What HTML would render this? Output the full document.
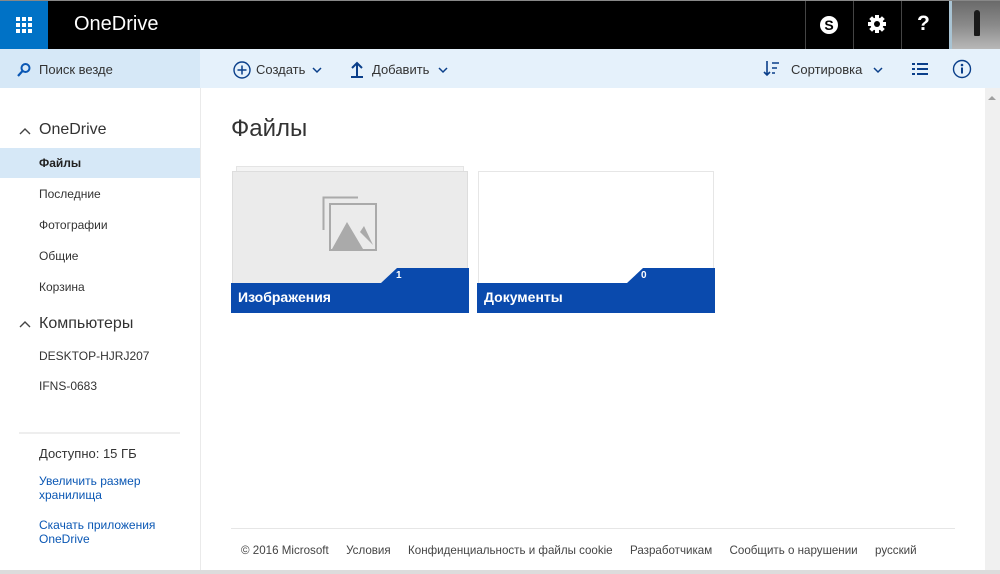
<!DOCTYPE html>
<html><head><meta charset="utf-8"><style>
*{margin:0;padding:0;box-sizing:border-box}
body{width:1000px;height:574px;overflow:hidden;background:#fff;font-family:"Segoe UI","Liberation Sans","DejaVu Sans",sans-serif;color:#333;position:relative}
.abs{position:absolute}
.top{left:0;top:0;width:1000px;height:49px;background:#000;border-top:1px solid #888}
.waffle{left:0;top:1px;width:48px;height:48px;background:#0072c6}
.cmd{left:0;top:49px;width:1000px;height:39px;background:#e5f1fb}
.search{left:0;top:49px;width:200px;height:39px;background:#d6e8f7}
.t{white-space:nowrap}
.blue{color:#0a57b4}
.footer span{margin-right:18px}
</style></head><body>
<div class="abs top"></div>
<div class="abs waffle">
<svg width="48" height="48"><g fill="#fff">
<rect x="16" y="16" width="4" height="4"/><rect x="22" y="16" width="4" height="4"/><rect x="28" y="16" width="4" height="4"/>
<rect x="16" y="22" width="4" height="4"/><rect x="22" y="22" width="4" height="4"/><rect x="28" y="22" width="4" height="4"/>
<rect x="16" y="28" width="4" height="4"/><rect x="22" y="28" width="4" height="4"/><rect x="28" y="28" width="4" height="4"/></g></svg></div>
<div class="abs t" style="left:74px;top:13px;font-size:20px;color:#fff">OneDrive</div>
<div class="abs" style="left:805px;top:1px;width:1px;height:48px;background:#444"></div>
<div class="abs" style="left:853px;top:1px;width:1px;height:48px;background:#444"></div>
<div class="abs" style="left:901px;top:1px;width:1px;height:48px;background:#444"></div>
<div class="abs" style="left:949px;top:1px;width:3px;height:48px;background:#a9c4d4"></div>
<div class="abs" style="left:952px;top:1px;width:48px;height:48px;background:linear-gradient(180deg,#6a6a6a,#8a8a8a 50%,#b8b8b8)"></div>
<div class="abs" style="left:974px;top:10px;width:6px;height:26px;background:#1a1a1a;border-radius:3px 3px 1px 1px"></div>
<svg class="abs" style="left:818px;top:14px" width="22" height="22"><circle cx="11" cy="11" r="9" fill="#fff"/><text x="11" y="16" font-size="14" font-weight="bold" text-anchor="middle" fill="#000" font-family="Liberation Sans">S</text></svg>
<svg class="abs" style="left:867px;top:14px" width="20" height="20" viewBox="0 0 20 20"><g fill="#fff"><circle cx="10" cy="10" r="6.5"/><rect x="8" y="1" width="4" height="18"/><rect x="1" y="8" width="18" height="4"/><rect x="8" y="1" width="4" height="18" transform="rotate(45 10 10)"/><rect x="8" y="1" width="4" height="18" transform="rotate(-45 10 10)"/></g><circle cx="10" cy="10" r="3" fill="#000"/></svg>
<div class="abs t" style="left:917px;top:12px;font-size:21px;font-weight:bold;color:#fff;font-family:'Liberation Sans'">?</div>
<div class="abs cmd"></div>
<div class="abs search"></div>
<svg class="abs" style="left:16px;top:62px" width="16" height="16"><circle cx="9.5" cy="6" r="4" fill="none" stroke="#0a57b4" stroke-width="2"/><line x1="6.5" y1="9" x2="2" y2="14" stroke="#0a57b4" stroke-width="2.2"/></svg>
<div class="abs t" style="left:39px;top:62px;font-size:13px;color:#333">Поиск везде</div>
<svg class="abs" style="left:232px;top:60px" width="20" height="20"><circle cx="10" cy="10" r="8" fill="none" stroke="#0a3f8a" stroke-width="1.4"/><path d="M10 5.5v9M5.5 10h9" stroke="#0a3f8a" stroke-width="1.5"/></svg>
<div class="abs t" style="left:256px;top:62px;font-size:13px">Создать</div>
<svg class="abs" style="left:312px;top:67px" width="10" height="7"><path d="M1 1l4 4 4-4" fill="none" stroke="#0a3f8a" stroke-width="1.5"/></svg>
<svg class="abs" style="left:350px;top:60px" width="14" height="18"><path d="M7 16V3M2 8l5-5 5 5M1 17h12" fill="none" stroke="#0a3f8a" stroke-width="2"/></svg>
<div class="abs t" style="left:372px;top:62px;font-size:13px">Добавить</div>
<svg class="abs" style="left:438px;top:67px" width="10" height="7"><path d="M1 1l4 4 4-4" fill="none" stroke="#0a3f8a" stroke-width="1.5"/></svg>
<svg class="abs" style="left:763px;top:60px" width="18" height="18"><path d="M4 1v14M1 12l3 3 3-3" fill="none" stroke="#0a3f8a" stroke-width="1.6"/><path d="M9 3h7M9 8h5M9 13h3" stroke="#0a3f8a" stroke-width="1.6"/></svg>
<div class="abs t" style="left:791px;top:62px;font-size:13px">Сортировка</div>
<svg class="abs" style="left:873px;top:67px" width="10" height="7"><path d="M1 1l4 4 4-4" fill="none" stroke="#0a3f8a" stroke-width="1.5"/></svg>
<svg class="abs" style="left:911px;top:61px" width="18" height="16"><g fill="#0a3f8a"><rect x="1" y="2" width="3" height="2"/><rect x="6" y="2" width="11" height="2"/><rect x="1" y="7" width="3" height="2"/><rect x="6" y="7" width="11" height="2"/><rect x="1" y="12" width="3" height="2"/><rect x="6" y="12" width="11" height="2"/></g></svg>
<svg class="abs" style="left:952px;top:59px" width="20" height="20"><circle cx="10" cy="10" r="8.5" fill="none" stroke="#0a3f8a" stroke-width="1.4"/><circle cx="10" cy="6" r="1.3" fill="#0a3f8a"/><rect x="9" y="8.5" width="2" height="6" fill="#0a3f8a"/></svg>
<div class="abs" style="left:200px;top:88px;width:1px;height:486px;background:#eaeaea"></div>
<div class="abs" style="left:985px;top:88px;width:15px;height:483px;background:#f0f0f0"></div>
<div class="abs" style="left:988px;top:96px;width:0;height:0;border-left:4px solid transparent;border-right:4px solid transparent;border-bottom:4px solid #a0a0a0"></div>
<div class="abs" style="left:0;top:570px;width:1000px;height:4px;background:#dcdcdc"></div>
<svg class="abs" style="left:19px;top:128px" width="12" height="8"><path d="M1 6l5-5 5 5" fill="none" stroke="#444" stroke-width="1.4"/></svg>
<div class="abs t" style="left:39px;top:121px;font-size:16px;color:#333">OneDrive</div>
<div class="abs" style="left:0;top:148px;width:200px;height:30px;background:#d6e8f7"></div>
<div class="abs t" style="left:39px;top:156px;font-size:12px;font-weight:bold;color:#222">Файлы</div>
<div class="abs t" style="left:39px;top:187px;font-size:12px">Последние</div>
<div class="abs t" style="left:39px;top:218px;font-size:12px">Фотографии</div>
<div class="abs t" style="left:39px;top:249px;font-size:12px">Общие</div>
<div class="abs t" style="left:39px;top:280px;font-size:12px">Корзина</div>
<svg class="abs" style="left:19px;top:321px" width="12" height="8"><path d="M1 6l5-5 5 5" fill="none" stroke="#444" stroke-width="1.4"/></svg>
<div class="abs t" style="left:39px;top:315px;font-size:16px;color:#333">Компьютеры</div>
<div class="abs t" style="left:39px;top:349px;font-size:12px">DESKTOP-HJRJ207</div>
<div class="abs t" style="left:39px;top:379px;font-size:12px">IFNS-0683</div>
<div class="abs" style="left:19px;top:432px;width:161px;height:2px;background:#eee"></div>
<div class="abs t" style="left:39px;top:446px;font-size:13px">Доступно: 15 ГБ</div>
<div class="abs blue" style="left:39px;top:474px;font-size:12px;line-height:14px;width:140px">Увеличить размер хранилища</div>
<div class="abs blue" style="left:39px;top:518px;font-size:12px;line-height:14px;width:140px">Скачать приложения OneDrive</div>
<div class="abs t" style="left:231px;top:115px;font-size:24px;color:#333">Файлы</div>
<div class="abs" style="left:236px;top:166px;width:228px;height:6px;border:1px solid #e4e4e4;border-bottom:none;background:#f4f4f4"></div>
<div class="abs" style="left:232px;top:171px;width:236px;height:142px;background:#ebebeb;border:1px solid #ddd"></div>
<svg class="abs" style="left:322px;top:196px" width="56" height="56"><path d="M1.5 34V1.5H36" fill="none" stroke="#aaa" stroke-width="2"/><rect x="8" y="8" width="46" height="46" fill="#ebebeb" stroke="#aaa" stroke-width="2"/><path d="M10 53L25 26 41 53z" fill="#aaa"/><path d="M38 36l4-6 9 19z" fill="#aaa"/></svg>
<svg class="abs" style="left:231px;top:267px" width="238" height="46"><path d="M0 16H150L166 1H238V46H0z" fill="#0a4aad"/></svg>
<div class="abs t" style="left:396px;top:270px;font-size:10px;font-weight:bold;color:#fff">1</div>
<div class="abs t" style="left:238px;top:289px;font-size:14px;font-weight:bold;color:#fff;font-family:'Liberation Sans'">Изображения</div>
<div class="abs" style="left:478px;top:171px;width:236px;height:142px;background:#fff;border:1px solid #e6e6e6"></div>
<svg class="abs" style="left:477px;top:267px" width="238" height="46"><path d="M0 16H150L166 1H238V46H0z" fill="#0a4aad"/></svg>
<div class="abs t" style="left:641px;top:270px;font-size:10px;font-weight:bold;color:#fff">0</div>
<div class="abs t" style="left:484px;top:289px;font-size:14px;font-weight:bold;color:#fff;font-family:'Liberation Sans'">Документы</div>
<div class="abs" style="left:231px;top:528px;width:724px;height:1px;background:#e6e6e6"></div>
<div class="abs t footer" style="left:241px;top:543px;font-size:12px;color:#444;transform:scaleX(0.965);transform-origin:0 0"><span>© 2016 Microsoft</span><span>Условия</span><span>Конфиденциальность и файлы cookie</span><span>Разработчикам</span><span>Сообщить о нарушении</span><span>русский</span></div>
</body></html>
